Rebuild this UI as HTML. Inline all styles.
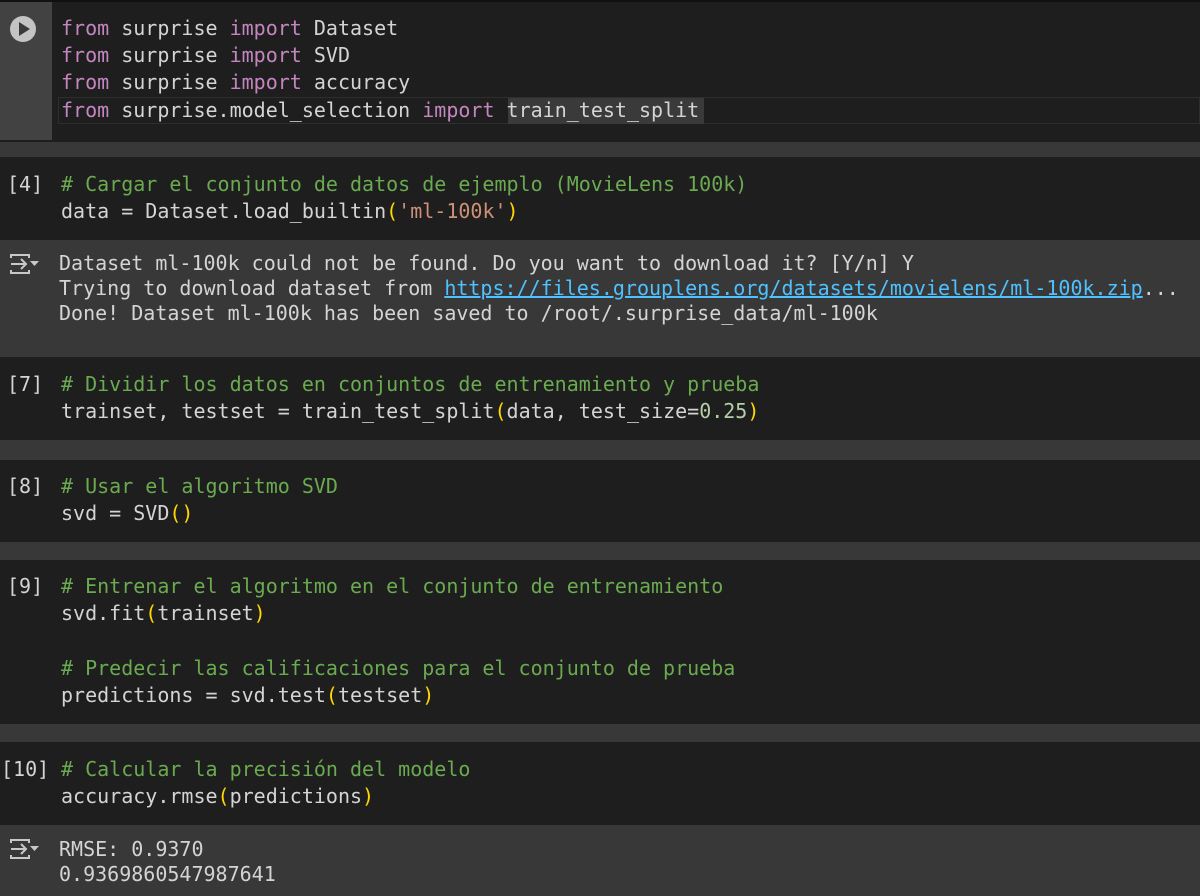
<html><head><style>
body{margin:0;width:1200px;height:896px;background:#383838;overflow:hidden;position:relative;font-family:"DejaVu Sans Mono","Liberation Mono",monospace;font-size:20px;color:#d4d4d4}
.c{position:absolute;left:0;width:1200px;background:#1e1e1e}
.l{position:absolute;left:61px;white-space:pre;line-height:27px;height:27px}
.ol{left:59px}
.n{position:absolute;left:7px;white-space:pre;line-height:27px}
.k{color:#c586c0}.g{color:#6aaa50}.s{color:#ce9178}.p{color:#ffd700}.u{color:#4fc1ff;text-decoration:underline}.m{color:#b5cea8}
.ic{position:absolute;left:9px}
</style></head><body>
<div class="c" style="top:0;height:140px;border-top:2px solid #111"></div>
<div style="position:absolute;left:0;top:2px;width:52px;height:138px;background:#424242"></div>
<div style="position:absolute;left:10px;top:16px;width:26px;height:26px;border-radius:50%;background:#c4c4c4"></div>
<div style="position:absolute;left:19px;top:22px;width:0;height:0;border-left:11px solid #3a3a3a;border-top:7px solid transparent;border-bottom:7px solid transparent"></div>
<div style="position:absolute;left:58px;top:97px;width:1142px;height:27px;border:1px solid #2e2e2e;box-sizing:border-box"></div>
<div style="position:absolute;left:508px;top:98px;width:196px;height:26px;background:#3a3a3a"></div>
<div class="l" style="top:15px"><span class="k">from</span> surprise <span class="k">import</span> Dataset</div>
<div class="l" style="top:42px"><span class="k">from</span> surprise <span class="k">import</span> SVD</div>
<div class="l" style="top:69px"><span class="k">from</span> surprise <span class="k">import</span> accuracy</div>
<div class="l" style="top:97px"><span class="k">from</span> surprise.model_selection <span class="k">import</span> train_test_split</div>

<div class="c" style="top:157px;height:83px"></div>
<div class="n" style="top:171px">[4]</div>
<div class="l" style="top:171px"><span class="g"># Cargar el conjunto de datos de ejemplo (MovieLens 100k)</span></div>
<div class="l" style="top:198px">data = Dataset.load_builtin<span class="p">(</span><span class="s">'ml-100k'</span><span class="p">)</span></div>
<svg class="ic" style="top:253px" width="32" height="22" viewBox="0 0 32 22"><g fill="none" stroke="#c8c8c8" stroke-width="2"><path d="M2 5V2h18v3M2 17v3h18v-3M2 11h15M12 6l5 5-5 5"/></g><path d="M21 8h9l-4.5 5z" fill="#c8c8c8"/></svg>
<div class="l ol" style="top:250px">Dataset ml-100k could not be found. Do you want to download it? [Y/n] Y</div>
<div class="l ol" style="top:275px">Trying to download dataset from <span class="u">https://files.grouplens.org/datasets/movielens/ml-100k.zip</span>...</div>
<div class="l ol" style="top:300px">Done! Dataset ml-100k has been saved to /root/.surprise_data/ml-100k</div>

<div class="c" style="top:357px;height:83px"></div>
<div class="n" style="top:371px">[7]</div>
<div class="l" style="top:371px"><span class="g"># Dividir los datos en conjuntos de entrenamiento y prueba</span></div>
<div class="l" style="top:398px">trainset, testset = train_test_split<span class="p">(</span>data, test_size=<span class="m">0.25</span><span class="p">)</span></div>

<div class="c" style="top:460px;height:82px"></div>
<div class="n" style="top:473px">[8]</div>
<div class="l" style="top:473px"><span class="g"># Usar el algoritmo SVD</span></div>
<div class="l" style="top:500px">svd = SVD<span class="p">()</span></div>

<div class="c" style="top:560px;height:164px"></div>
<div class="n" style="top:573px">[9]</div>
<div class="l" style="top:573px"><span class="g"># Entrenar el algoritmo en el conjunto de entrenamiento</span></div>
<div class="l" style="top:600px">svd.fit<span class="p">(</span>trainset<span class="p">)</span></div>
<div class="l" style="top:655px"><span class="g"># Predecir las calificaciones para el conjunto de prueba</span></div>
<div class="l" style="top:682px">predictions = svd.test<span class="p">(</span>testset<span class="p">)</span></div>

<div class="c" style="top:742px;height:83px"></div>
<div class="n" style="top:756px;left:1px">[10]</div>
<div class="l" style="top:756px"><span class="g"># Calcular la precisión del modelo</span></div>
<div class="l" style="top:783px">accuracy.rmse<span class="p">(</span>predictions<span class="p">)</span></div>
<svg class="ic" style="top:838px" width="32" height="22" viewBox="0 0 32 22"><g fill="none" stroke="#c8c8c8" stroke-width="2"><path d="M2 5V2h18v3M2 17v3h18v-3M2 11h15M12 6l5 5-5 5"/></g><path d="M21 8h9l-4.5 5z" fill="#c8c8c8"/></svg>
<div class="l ol" style="top:836px">RMSE: 0.9370</div>
<div class="l ol" style="top:861px">0.9369860547987641</div>
</body></html>
